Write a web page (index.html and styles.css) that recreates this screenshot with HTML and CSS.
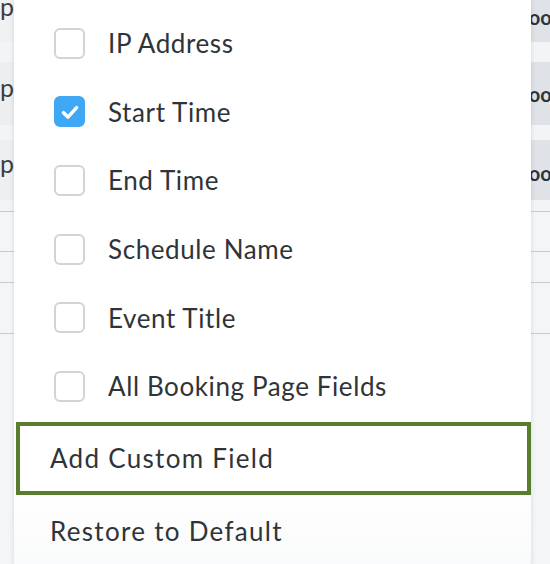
FILE: index.html
```html
<!DOCTYPE html>
<html lang="en">
<head>
    <meta charset="UTF-8">
    <meta name="viewport" content="width=device-width, initial-scale=1.0">
    <title>Export Fields</title>
    <link rel="stylesheet" href="styles.css">
</head>
<body>
    <!-- Table rows behind the dropdown -->
    <div class="table">
        <div class="row shaded first"><span class="cell lead">App</span><span class="cell tail">Zoom</span></div>
        <div class="spacer s20"></div>
        <div class="row shaded second"><span class="cell lead">App</span><span class="cell tail">Zoom</span></div>
        <div class="spacer s15"></div>
        <div class="row shaded third"><span class="cell lead">App</span><span class="cell tail">Zoom</span></div>
        <div class="spacer s11"></div>
        <div class="row plain h40"></div>
        <div class="row plain h31"></div>
        <div class="row plain h51"></div>
        <div class="row plain rest"></div>
    </div>

    <!-- Column picker dropdown -->
    <div class="menu">
        <label class="option"><span class="box"></span>IP Address</label>
        <label class="option"><span class="box checked">
            <svg viewBox="0 0 24 24" width="26" height="26"><path d="M6 12.6l4.1 4.1 8-8.8" fill="none" stroke="#fff" stroke-width="3.2" stroke-linecap="round" stroke-linejoin="round"/></svg>
        </span>Start Time</label>
        <label class="option"><span class="box"></span>End Time</label>
        <label class="option"><span class="box"></span>Schedule Name</label>
        <label class="option"><span class="box"></span>Event Title</label>
        <label class="option"><span class="box"></span>All Booking Page Fields</label>
        <div class="action focused">Add Custom Field</div>
        <div class="action">Restore to Default</div>
    </div>
</body>
</html>
```

FILE: styles.css
```css
* { margin: 0; padding: 0; box-sizing: border-box; }

body {
    font-family: Lato, "Open Sans", sans-serif;
    color: #2f3438;
    background: #f4f5f7;
    width: 550px;
    height: 564px;
    overflow: hidden;
    position: relative;
}

.table { width: 550px; }

.row {
    display: flex;
    justify-content: space-between;
    align-items: center;
    overflow: hidden;
}

.shaded .cell {
    height: 100%;
    display: flex;
    align-items: center;
    white-space: nowrap;
}

/* first column is cut by the menu, text runs past its left edge */
.lead {
    width: 14px;
    justify-content: flex-end;
    background: #eceef0;
    padding-bottom: 14px;
    font-size: 25px;
    color: #3a3f44;
}

.tail {
    width: 40px;
    padding-left: 7px;
    background: #dfe3e8;
    font-size: 20px;
    font-weight: 700;
}

.first { height: 42px; }
.first .lead { background: #f0f1f3; padding-bottom: 30px; }
.first .tail { padding-bottom: 8px; }
.second { height: 63px; }
.third { height: 60px; }
.third .tail { padding-top: 6px; }
.third .lead { background: #eeeff1; }

.spacer { background: #f3f4f6; }
.s20 { height: 20px; }
.s15 { height: 15px; }
.s11 { height: 11px; }

.plain {
    border-top: 1px solid #c9cbce;
    background: #f4f5f6;
}
.h40 { height: 40px; }
.h31 { height: 31px; }
.h51 { height: 51px; }
.rest { height: 240px; }

.menu {
    position: absolute;
    left: 14px;
    top: 0;
    width: 517px;
    height: 580px;
    padding-top: 9px;
    background: linear-gradient(#fff 85%, #f8f9fa);
    box-shadow: 0 0 5px rgba(0, 0, 0, 0.12);
}

.option,
.action {
    display: flex;
    align-items: center;
    font-size: 26px;
    letter-spacing: 0.6px;
}

.option {
    height: 68.6px;
    padding-left: 40px;
}

.box {
    width: 31px;
    height: 31px;
    margin-right: 23px;
    border: 2px solid #d2d3d5;
    border-radius: 6px;
    display: flex;
    align-items: center;
    justify-content: center;
    background: #fff;
}

.box.checked {
    background: #3fa7f3;
    border-color: #3fa7f3;
}

.action {
    height: 73px;
    padding-left: 36px;
    letter-spacing: 1.3px;
}

.focused {
    margin: 1px 0 0 2px;
    border: 4.5px solid #587d2c;
    padding-left: 30px;
}
```
